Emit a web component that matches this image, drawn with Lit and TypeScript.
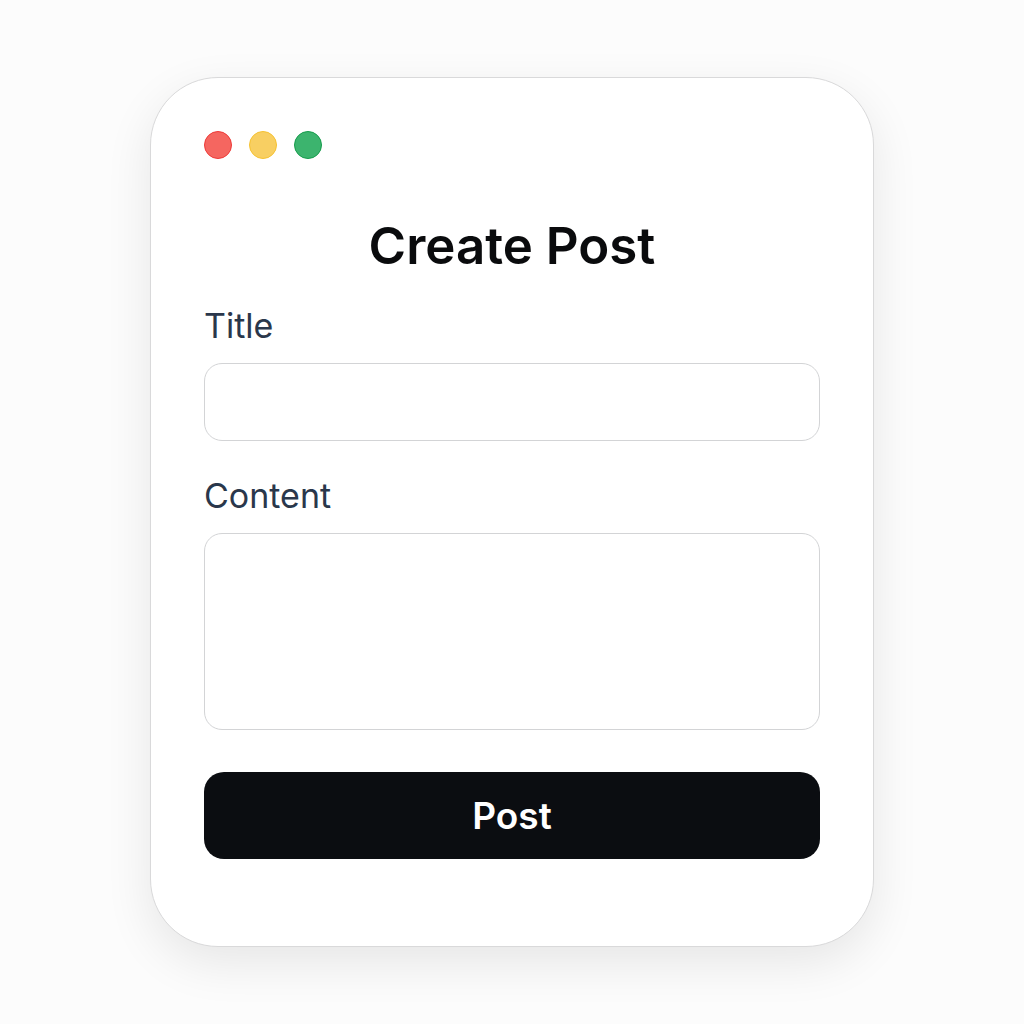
import { LitElement, html, css } from "lit";
import { customElement } from "lit/decorators.js";

@customElement("app-root")
export class AppRoot extends LitElement {
  static styles = css`
    :host {
      display: block;
      font-family: Inter, "Liberation Sans", sans-serif;
    }
    * {
      box-sizing: border-box;
    }
    .page {
      min-height: 100vh;
      display: flex;
      flex-direction: column;
      align-items: center;
      justify-content: center;
      padding: 32px;
      background: #fcfcfc;
    }
    .card {
      width: 100%;
      max-width: 724px;
      padding: 53px 53px 87px;
      display: flex;
      flex-direction: column;
      background: #ffffff;
      border: 1px solid #d9d9da;
      border-radius: 68px;
      box-shadow: 0 16px 48px rgba(0, 0, 0, 0.09);
    }
    .dots {
      display: flex;
      gap: 17px;
    }
    .dot {
      width: 28px;
      height: 28px;
      border: 1px solid;
      border-radius: 50%;
    }
    .red {
      background: #f56660;
      border-color: #ee3a38;
    }
    .yellow {
      background: #f8cf62;
      border-color: #f6c231;
    }
    .green {
      background: #3cb46e;
      border-color: #169c4c;
    }
    h1 {
      margin: 53px 0 25px;
      font-size: 51px;
      line-height: 68px;
      font-weight: 600;
      text-align: center;
      color: #0a0b0d;
    }
    form {
      display: flex;
      flex-direction: column;
      gap: 34px;
    }
    .group {
      display: flex;
      flex-direction: column;
      gap: 16px;
    }
    label {
      font-size: 34px;
      line-height: 42px;
      font-weight: 400;
      color: #2a374b;
    }
    .field {
      width: 100%;
      padding: 16px 20px;
      font: inherit;
      font-size: 28px;
      color: #0a0b0d;
      background: #ffffff;
      border: 1px solid #d3d4d6;
      border-radius: 18px;
      resize: none;
    }
    .line {
      height: 78px;
    }
    .area {
      height: 197px;
    }
    button {
      margin-top: 8px;
      height: 87px;
      border: 0;
      border-radius: 20px;
      background: #0b0d11;
      color: #ffffff;
      font: inherit;
      font-size: 37px;
      font-weight: 600;
    }
  `;

  render() {
    return html`
      <main class="page">
        <section class="card">
          <div class="dots" aria-hidden="true">
            <span class="dot red"></span>
            <span class="dot yellow"></span>
            <span class="dot green"></span>
          </div>
          <h1>Create Post</h1>
          <form @submit=${(e: Event) => e.preventDefault()}>
            <div class="group">
              <label for="title">Title</label>
              <input class="field line" id="title" type="text" />
            </div>
            <div class="group">
              <label for="content">Content</label>
              <textarea class="field area" id="content"></textarea>
            </div>
            <button type="submit">Post</button>
          </form>
        </section>
      </main>
    `;
  }
}
